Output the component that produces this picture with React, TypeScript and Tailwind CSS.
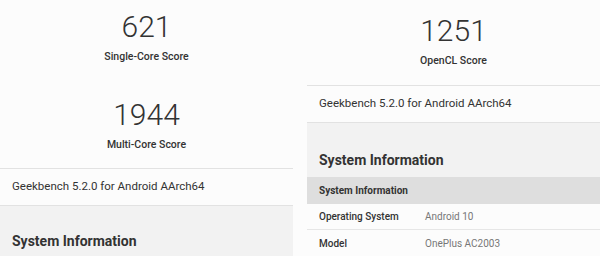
import React from 'react'

function Score({ value, label, className }: { value: string; label: string; className?: string }) {
  return (
    <div className={`flex flex-col items-center ${className ?? ''}`}>
      <div className="text-[30px] leading-[36px] font-light text-[#333]">{value}</div>
      <div className="mt-[4px] text-[10.5px] leading-[16px] font-medium text-[#333]">{label}</div>
    </div>
  )
}

function VersionRow() {
  return (
    <div className="border-t border-b border-[#e2e2e2] h-[38px] flex items-center px-3 text-[11.5px] text-[#333]">
      Geekbench 5.2.0 for Android AArch64
    </div>
  )
}

export default function App() {
  return (
    <div
      className="flex h-[256px] w-[600px] overflow-hidden bg-[#fcfcfc] gap-[14px]"
      style={{ fontFamily: 'Roboto, "Noto Sans", sans-serif' }}
    >
      {/* Left screen */}
      <div className="w-[293px] flex flex-col shrink-0">
        <div className="pt-[9px] pb-[15px]">
          <Score value="621" label="Single-Core Score" />
          <Score value="1944" label="Multi-Core Score" className="mt-[32px]" />
        </div>
        <VersionRow />
        <div className="flex-1 bg-[#f2f2f2] px-3 pt-[25px]">
          <h2 className="text-[14px] leading-[20px] font-bold text-[#333]">System Information</h2>
        </div>
      </div>

      {/* Right screen */}
      <div className="flex-1 flex flex-col">
        <div className="pt-[13px] pb-[16px]">
          <Score value="1251" label="OpenCL Score" />
        </div>
        <VersionRow />
        <div className="bg-[#f2f2f2] px-3 pt-[27px] pb-[7px]">
          <h2 className="text-[14px] leading-[20px] font-bold text-[#333]">System Information</h2>
        </div>
        <div className="bg-[#dedede] h-[27px] flex items-center px-3 text-[10px] font-bold text-[#333]">
          System Information
        </div>
        <div className="flex items-center h-[26px] px-3 text-[10px] border-b border-[#e6e6e6]">
          <div className="w-[106px] font-medium text-[#333]">Operating System</div>
          <div className="text-[#777]">Android 10</div>
        </div>
        <div className="flex items-center h-[26px] px-3 text-[10px]">
          <div className="w-[106px] font-medium text-[#333]">Model</div>
          <div className="text-[#777]">OnePlus AC2003</div>
        </div>
      </div>
    </div>
  )
}
